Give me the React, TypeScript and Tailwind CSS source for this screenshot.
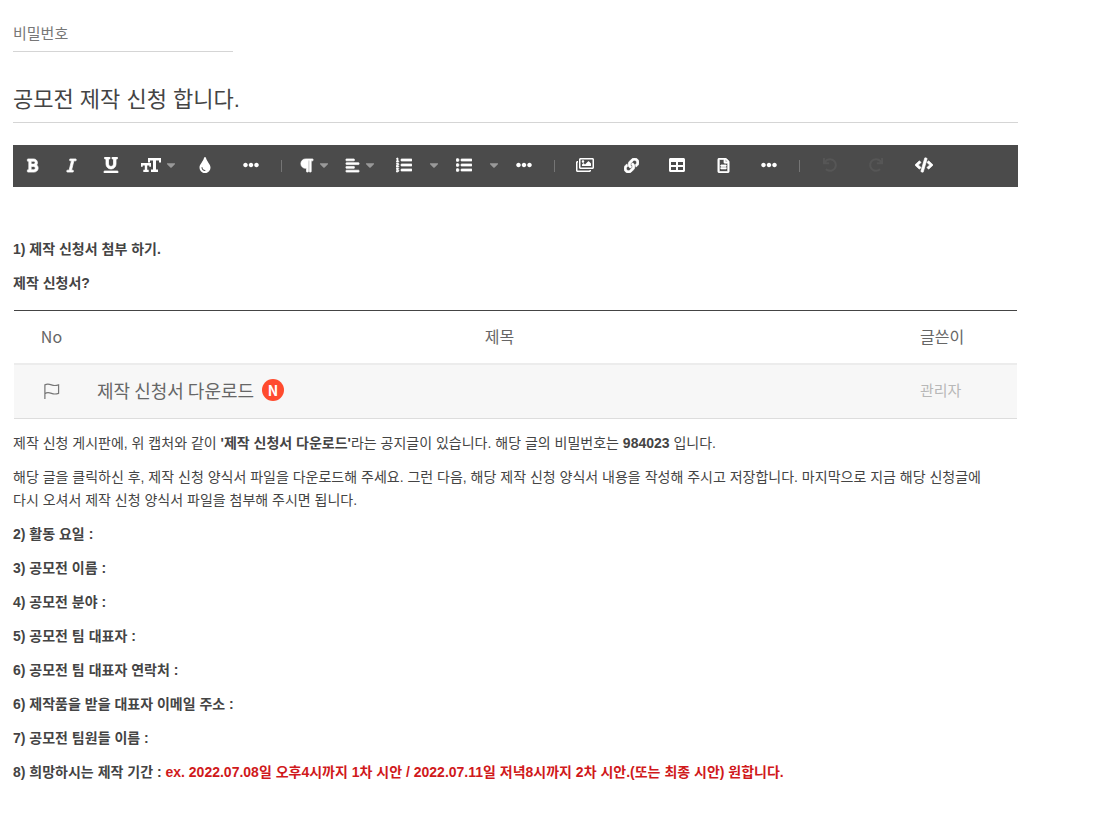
import type { ReactNode } from "react";
import { clsx } from "clsx";
import {
  FaAlignLeft,
  FaBold,
  FaCaretDown,
  FaCode,
  FaEllipsisH,
  FaItalic,
  FaLink,
  FaListOl,
  FaListUl,
  FaParagraph,
  FaRedo,
  FaRegFileAlt,
  FaRegImages,
  FaTable,
  FaTint,
  FaUnderline,
  FaUndo,
} from "react-icons/fa";

const FontSizeIcon = () => (
  <svg width="20" height="14" viewBox="0 0 20 14" fill="currentColor" aria-hidden="true">
    <path d="M7 0h13v4.500h-2V2.500h-3v9h2V14h-7v-2.500h2v-9H9v2H7z" />
    <path d="M0 5h10v3.800H8.300V7.500H6.200v4.300h1.500V14H2.300v-2.200h1.500V7.500H1.700v1.300H0z" />
  </svg>
);

const FlagIcon = () => (
  <svg width="17" height="18" viewBox="0 0 18 18" fill="none" stroke="#777" strokeWidth="1.300" aria-hidden="true">
    <path d="M2 17.500V2.500c2.500-1.600 4.500-1 7 0s4.500 1 7.500 0v9c-3 1-5 1-7.500 0s-5-1.500-7 .5" />
  </svg>
);

const Caret = () => <FaCaretDown size={14} className="text-[#999]" />;

type ToolButtonProps = {
  label: string;
  width?: string;
  dropdown?: boolean;
  disabled?: boolean;
  bold?: boolean;
  children?: ReactNode;
};

const ToolButton = ({ label, width = "w-[46px]", dropdown, disabled, bold, children }: ToolButtonProps) => (
  <button
    type="button"
    aria-label={label}
    disabled={disabled}
    className={clsx(
      "flex h-full shrink-0 items-center justify-center pb-0.5",
      width,
      dropdown && "gap-[3px] pl-1.5",
      bold && "[&>svg:first-child]:stroke-[24]",
      disabled ? "text-[#565656]" : "text-white"
    )}
  >
    {children}
    {dropdown && <Caret />}
  </button>
);

const Separator = () => (
  <div className="flex w-[15px] shrink-0 justify-center">
    <div className="h-3 w-px bg-[#757575]" />
  </div>
);

const Toolbar = () => (
  <div role="toolbar" aria-label="편집 도구" className="flex h-[42px] items-center bg-[#4b4b4b]">
    <ToolButton label="굵게" width="w-[39px]" bold><FaBold size={15} /></ToolButton>
    <ToolButton label="기울임" width="w-[39px]" bold><FaItalic size={15} /></ToolButton>
    <ToolButton label="밑줄" width="w-[39px]" bold><FaUnderline size={16} /></ToolButton>
    <ToolButton label="글자 크기" width="w-[52px]" dropdown><FontSizeIcon /></ToolButton>
    <ToolButton label="글자 색"><FaTint size={16} /></ToolButton>
    <ToolButton label="글자 더보기"><FaEllipsisH size={16} /></ToolButton>
    <Separator />
    <ToolButton label="문단 형식" dropdown bold><FaParagraph size={15} /></ToolButton>
    <ToolButton label="정렬" dropdown bold><FaAlignLeft size={15} /></ToolButton>
    <ToolButton label="번호 목록" bold><FaListOl size={16} /></ToolButton>
    <ToolButton label="번호 목록 모양" width="w-[14px]"><Caret /></ToolButton>
    <ToolButton label="글머리 목록" bold><FaListUl size={16} /></ToolButton>
    <ToolButton label="글머리 목록 모양" width="w-[14px]"><Caret /></ToolButton>
    <ToolButton label="문단 더보기"><FaEllipsisH size={16} /></ToolButton>
    <Separator />
    <ToolButton label="이미지"><FaRegImages size={18} /></ToolButton>
    <ToolButton label="링크" bold><FaLink size={15} /></ToolButton>
    <ToolButton label="표"><FaTable size={16} /></ToolButton>
    <ToolButton label="파일" bold><FaRegFileAlt size={15} /></ToolButton>
    <ToolButton label="삽입 더보기"><FaEllipsisH size={16} /></ToolButton>
    <Separator />
    <ToolButton label="실행 취소" disabled><FaUndo size={14} /></ToolButton>
    <ToolButton label="다시 실행" disabled><FaRedo size={14} /></ToolButton>
    <ToolButton label="코드 보기" width="w-[50px]" bold><FaCode size={18} /></ToolButton>
  </div>
);

const NoticeTable = () => (
  <div className="px-px">
    <table className="w-full table-fixed border-collapse border-t border-[#444] font-['Noto_Sans_CJK_KR',sans-serif] text-[#666]">
      <thead>
        <tr className="h-[53px] border-b-2 border-[#ececec] text-base">
          <th className="w-[75px] pb-0.5 font-normal">No</th>
          <th className="pr-2.5 pb-0.5 font-normal">제목</th>
          <th className="w-[97px] pb-0.5 text-left font-normal">글쓴이</th>
        </tr>
      </thead>
      <tbody>
        <tr className="h-[55px] border-b border-[#ddd] bg-[#f7f7f7]">
          <td>
            <div className="flex justify-center">
              <FlagIcon />
            </div>
          </td>
          <td className="pb-0.5 pl-2">
            <div className="flex items-center gap-2">
              <a href="#" className="text-lg leading-6">제작 신청서 다운로드</a>
              <span className="flex size-[22px] items-center justify-center rounded-full bg-[#ff4b2e] text-sm font-bold text-white">
                N
              </span>
            </div>
          </td>
          <td className="pb-1 text-[15px] text-[#b8b8b8]">관리자</td>
        </tr>
      </tbody>
    </table>
  </div>
);

const fields = [
  "2) 활동 요일 :",
  "3) 공모전 이름 :",
  "4) 공모전 분야 :",
  "5) 공모전 팀 대표자 :",
  "6) 공모전 팀 대표자 연락처 :",
  "6) 제작품을 받을 대표자 이메일 주소 :",
  "7) 공모전 팀원들 이름 :",
];

export default function App() {
  return (
    <main className="min-h-screen bg-white pr-[85px] pl-[13px] pt-4 pb-8 font-['Liberation_Sans','Noto_Sans_CJK_KR',sans-serif] text-sm leading-[23px] break-keep text-[#444]">
      <input
        type="password"
        aria-label="비밀번호"
        placeholder="비밀번호"
        className="block h-9 w-[220px] border-b border-[#d5d5d5] text-[15px] outline-none placeholder:text-[#777]"
      />
      <input
        type="text"
        aria-label="제목"
        defaultValue="공모전 제작 신청 합니다."
        className="mt-6 mb-[22px] block h-[47px] w-full border-b border-[#d5d5d5] pb-1 text-[22px] outline-none"
      />
      <Toolbar />

      <div className="mt-[51px] flex flex-col gap-[11px]">
        <p className="font-bold">1) 제작 신청서 첨부 하기.</p>
        <p className="font-bold">제작 신청서?</p>
        <div className="mt-1 mb-0.5">
          <NoticeTable />
        </div>
        <p>
          제작 신청 게시판에, 위 캡처와 같이 <strong>'제작 신청서 다운로드'</strong>라는 공지글이 있습니다. 해당 글의
          비밀번호는 <strong>984023</strong> 입니다.
        </p>
        <p className="pr-4">
          해당 글을 클릭하신 후, 제작 신청 양식서 파일을 다운로드해 주세요. 그런 다음, 해당 제작 신청 양식서 내용을 작성해
          주시고 저장합니다. 마지막으로 지금 해당 신청글에 다시 오셔서 제작 신청 양식서 파일을 첨부해 주시면 됩니다.
        </p>
        {fields.map((field) => (
          <p key={field} className="font-bold">
            {field}
          </p>
        ))}
        <p className="font-bold">
          8) 희망하시는 제작 기간 :{" "}
          <span className="text-[#d0191b]">
            ex. 2022.07.08일 오후4시까지 1차 시안 / 2022.07.11일 저녁8시까지 2차 시안.(또는 최종 시안) 원합니다.
          </span>
        </p>
      </div>
    </main>
  );
}
